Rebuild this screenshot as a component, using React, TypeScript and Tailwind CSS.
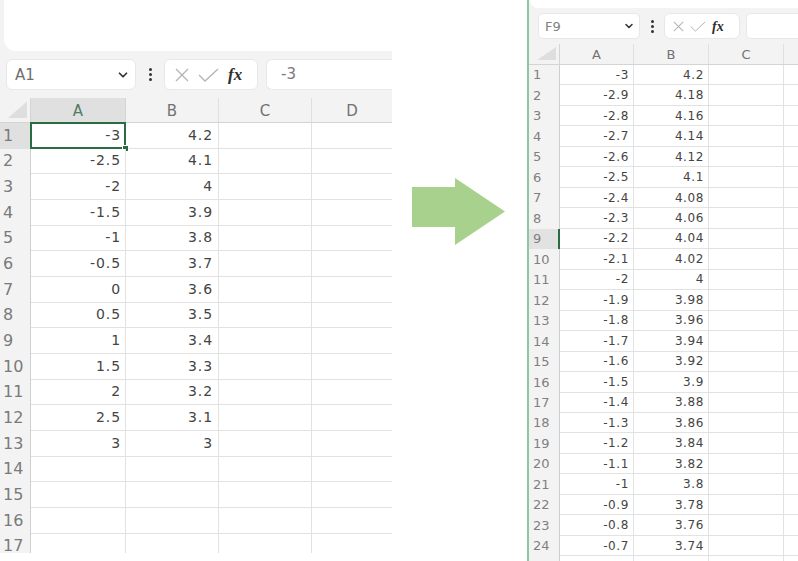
import { ChevronDown } from "lucide-react";

const LEFT = Array.from({ length: 17 }, (_, i) =>
  i < 13 ? { a: String((i * 5 - 30) / 10), b: String((42 - i) / 10) } : { a: "", b: "" }
);

const RIGHT = Array.from({ length: 25 }, (_, i) =>
  i < 24 ? { a: String((i - 30) / 10), b: String((420 - 2 * i) / 100) } : { a: "", b: "" }
);

function Dots() {
  return (
    <div className="flex flex-col gap-[2px]">
      <span className="w-[3px] h-[3px] rounded-full bg-[#333]" />
      <span className="w-[3px] h-[3px] rounded-full bg-[#333]" />
      <span className="w-[3px] h-[3px] rounded-full bg-[#333]" />
    </div>
  );
}

function FxBox({ small }: { small?: boolean }) {
  const s = small ? 11 : 14;
  return (
    <div
      className={`bg-white rounded-[6px] border border-[#e8e8e8] flex items-center ${
        small ? "w-[76px] h-[26px] pl-[8px] gap-[6px]" : "w-[94px] h-[31px] pl-[10px] gap-[9px]"
      }`}
    >
      <svg width={s} height={s} viewBox="0 0 14 14">
        <path d="M1 1 L13 13 M13 1 L1 13" stroke="#b4b4b4" strokeWidth="1.3" fill="none" />
      </svg>
      <svg width={small ? 16 : 21} height={s} viewBox="0 0 21 14">
        <path d="M1 7 L7 13 L20 1" stroke="#b4b4b4" strokeWidth="1.3" fill="none" />
      </svg>
      <span
        className={`font-['Liberation_Serif',serif] italic font-bold text-[#2e2e2e] ${
          small ? "text-[14px]" : "text-[17px]"
        }`}
      >
        fx
      </span>
    </div>
  );
}

function Corner({ h }: { h: number }) {
  return (
    <svg width="31" height={h} className="block">
      <polygon points={`27,${h - 4} 27,${h * 0.15} 8,${h - 4}`} fill="#dedede" />
    </svg>
  );
}

export default function App() {
  return (
    <div className="w-[798px] h-[561px] bg-white flex overflow-hidden font-['DejaVu_Sans',sans-serif]">
      {/* left sheet */}
      <div className="w-[392px] h-[553px] bg-[#f3f3f3] flex flex-col overflow-hidden shrink-0">
        <div className="ml-[4px] h-[51px] bg-white rounded-bl-[12px] shrink-0" />
        <div className="h-[47px] flex items-center pl-[6px] shrink-0">
          <div className="w-[130px] h-[31px] bg-white rounded-[6px] border border-[#e8e8e8] flex items-center justify-between pl-[8px] pr-[5px]">
            <span className="text-[15px] text-[#707070] pt-[2px]">A1</span>
            <ChevronDown size={14} strokeWidth={3} className="text-[#333]" />
          </div>
          <div className="w-[28px] flex justify-center">
            <Dots />
          </div>
          <FxBox />
          <div className="ml-[8px] flex-1 h-[31px] bg-white rounded-l-[6px] border border-r-0 border-[#e8e8e8] flex items-center pl-[14px] text-[15px] text-[#7a7a7a]">
            -3
          </div>
        </div>

        <div className="flex h-[25px] shrink-0 border-b border-[#d4d4d4] text-[15px] text-[#727272]">
          <div className="w-[31px] border-r border-[#d4d4d4]">
            <Corner h={24} />
          </div>
          <div className="w-[95px] bg-[#e0e0e0] border-r border-[#d4d4d4] flex items-center justify-center pt-[2px] text-[#4f7d5f]">
            A
          </div>
          <div className="w-[93px] border-r border-[#e0e0e0] flex items-center justify-center pt-[2px]">B</div>
          <div className="w-[93px] border-r border-[#e0e0e0] flex items-center justify-center pt-[2px]">C</div>
          <div className="flex-1 flex items-center justify-center pt-[2px]">D</div>
        </div>

        {LEFT.map((r, i) => (
          <div key={i} className="flex h-[25.67px] shrink-0">
            <div
              className={`w-[31px] border-r border-[#cfcfcf] flex items-center pl-[3px] text-[16px] text-[#7a7a7a] ${
                i === 0 ? "bg-[#e0e0e0]" : ""
              }`}
            >
              {i + 1}
            </div>
            <div className="relative w-[95px] bg-white border-r border-b border-[#e2e2e2] flex items-center justify-end pr-[4px] text-[14px] tracking-[0.9px] text-[#444]">
              {r.a}
              {i === 0 && (
                <>
                  <div className="absolute -left-[1px] -top-[1px] -right-[1px] -bottom-[1px] border-2 border-[#2a6c44]" />
                  <div className="absolute -right-[4px] -bottom-[4px] w-[7px] h-[7px] bg-[#2a6c44] border border-white" />
                </>
              )}
            </div>
            <div className="w-[93px] bg-white border-r border-b border-[#e2e2e2] flex items-center justify-end pr-[5px] text-[14px] tracking-[0.9px] text-[#444]">
              {r.b}
            </div>
            <div className="w-[93px] bg-white border-r border-b border-[#e2e2e2]" />
            <div className="flex-1 bg-white border-b border-[#e2e2e2]" />
          </div>
        ))}
      </div>

      {/* arrow */}
      <div className="flex-1 pt-[178px] pl-[20px]">
        <svg width="93" height="67" viewBox="0 0 93 67">
          <polygon points="0,9 43,9 43,0 93,33.5 43,67 43,49 0,49" fill="#a9d18e" />
        </svg>
      </div>

      {/* right sheet */}
      <div className="w-[271px] h-[561px] shrink-0 border-l-2 border-[#8cc7a1] bg-[#f3f3f3] flex flex-col overflow-hidden">
        <div className="ml-[1px] h-[8px] bg-white rounded-bl-[8px] shrink-0" />
        <div className="h-[36px] flex items-center pl-[9px] shrink-0">
          <div className="w-[102px] h-[26px] bg-white rounded-[5px] border border-[#e8e8e8] flex items-center justify-between pl-[6px] pr-[4px]">
            <span className="text-[13px] text-[#808080] pt-[2px]">F9</span>
            <ChevronDown size={12} strokeWidth={3} className="text-[#333]" />
          </div>
          <div className="w-[24px] flex justify-center">
            <Dots />
          </div>
          <FxBox small />
          <div className="ml-[6px] flex-1 h-[26px] bg-white rounded-l-[5px] border border-r-0 border-[#e8e8e8]" />
        </div>

        <div className="flex h-[21px] shrink-0 border-b border-[#d4d4d4] text-[13px] text-[#727272]">
          <div className="w-[31px] border-r border-[#d4d4d4]">
            <Corner h={20} />
          </div>
          <div className="w-[74px] border-r border-[#e0e0e0] flex items-center justify-center pt-[2px]">A</div>
          <div className="w-[75px] border-r border-[#e0e0e0] flex items-center justify-center pt-[2px]">B</div>
          <div className="w-[75px] border-r border-[#e0e0e0] flex items-center justify-center pt-[2px]">C</div>
          <div className="flex-1" />
        </div>

        {RIGHT.map((r, i) => (
          <div key={i} className="flex h-[20.48px] shrink-0">
            <div
              className={`w-[31px] flex items-center pl-[4px] text-[13px] text-[#808080] ${
                i === 8 ? "bg-[#e2e2e2] border-r-2 border-[#2a6c44]" : "border-r border-[#cfcfcf]"
              }`}
            >
              {i < 24 ? i + 1 : ""}
            </div>
            <div className="w-[74px] bg-white border-r border-b border-[#e2e2e2] flex items-center justify-end pr-[4px] text-[12px] tracking-[0.6px] text-[#444]">
              {r.a}
            </div>
            <div className="w-[75px] bg-white border-r border-b border-[#e2e2e2] flex items-center justify-end pr-[4px] text-[12px] tracking-[0.6px] text-[#444]">
              {r.b}
            </div>
            <div className="w-[75px] bg-white border-r border-b border-[#e2e2e2]" />
            <div className="flex-1 bg-white border-b border-[#e2e2e2]" />
          </div>
        ))}
      </div>
    </div>
  );
}
